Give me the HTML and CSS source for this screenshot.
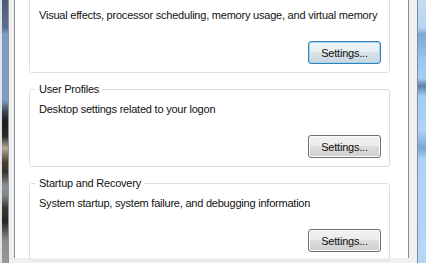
FILE: index.html
```html
<!DOCTYPE html>
<html lang="en">
<head>
    <meta charset="UTF-8">
    <title>System Properties - Advanced</title>
    <link rel="stylesheet" href="styles.css">
</head>
<body>
    <div class="glass glass-left"></div>
    <div class="dialog">
        <div class="tab-page">
            <div class="group group-first">
                <div class="group-title">Performance</div>
                <p class="group-desc">Visual effects, processor scheduling, memory usage, and virtual memory</p>
                <div class="group-actions">
                    <button class="btn btn-default">Settings...</button>
                </div>
            </div>

            <div class="group">
                <div class="group-title">User Profiles</div>
                <p class="group-desc">Desktop settings related to your logon</p>
                <div class="group-actions">
                    <button class="btn">Settings...</button>
                </div>
            </div>

            <div class="group">
                <div class="group-title">Startup and Recovery</div>
                <p class="group-desc">System startup, system failure, and debugging information</p>
                <div class="group-actions">
                    <button class="btn">Settings...</button>
                </div>
            </div>
        </div>
    </div>
    <div class="glass glass-right"></div>
</body>
</html>
```

FILE: styles.css
```css
* {
    margin: 0;
    padding: 0;
    box-sizing: border-box;
}

body {
    font-family: 'Liberation Sans', Arial, sans-serif;
    font-size: 11px;
    letter-spacing: -0.22px;
    color: #111;
    display: flex;
    width: 426px;
    height: 263px;
    overflow: hidden;
    background: #f0f0f0;
}

/* window frame (aero glass) */
.glass {
    height: 100%;
    flex-shrink: 0;
}

.glass-left {
    width: 9px;
    border-left: 2px solid #dfe4ea;
    border-right: 1px solid #8a9098;
    background: linear-gradient(180deg,
        #4c5d74 0px, #5a7090 28px, #7c9cc4 34px, #7d9cc3 100px,
        #3c4450 112px, #1e1e1e 122px, #2a2826 136px, #b4ab94 148px,
        #4a4033 162px, #3a3128 172px, #8d9392 186px, #7f8584 196px,
        #3d352b 208px, #2c2620 222px, #8b8b89 240px, #9a9a98 263px);
}

.glass-right {
    width: 9px;
    border-left: 1px solid #7c8ea4;
    background: linear-gradient(180deg,
        #c6dcf2 0px, #b6d4f2 28px, #7fa6d4 34px, #9cc4ec 60px,
        #a9cff3 78px, #5f7fa6 86px, #a4cbf2 96px, #b0d3f4 130px,
        #7ea6d6 148px, #aed2f4 160px, #b5d7f6 263px);
}

.dialog {
    flex: 1;
    min-width: 0;
    padding: 0 8px 0 5px;
    background: #f0f0f0;
}

.tab-page {
    height: 100%;
    background: #fff;
    border-left: 1px solid #898c95;
    border-right: 1px solid #898c95;
    padding: 0 18px 0 14px;
}

/* group boxes */
.group {
    height: 78px;
    border: 1px solid #d5dfe5;
    border-radius: 3px;
    padding: 0 8px 0 9px;
    margin-top: 16px;
}

.group-first {
    margin-top: -5px;
}

.group-title {
    width: fit-content;
    margin: -9px 0 0 -4px;
    padding: 0 3px 0 4px;
    line-height: 16px;
    background: #fff;
}

.group-desc {
    margin-top: 4px;
    line-height: 16px;
    white-space: nowrap;
}

.group-actions {
    display: flex;
    justify-content: flex-end;
    margin-top: 18px;
}

/* windows 7 push buttons */
.btn {
    width: 73px;
    height: 23px;
    font-family: inherit;
    font-size: 11px;
    letter-spacing: inherit;
    color: #111;
    border: 1px solid #707070;
    border-radius: 3px;
    background: linear-gradient(180deg, #f2f2f2 0%, #ebebeb 50%, #dddddd 50%, #cfcfcf 100%);
    box-shadow: inset 0 0 0 1px #fbfbfb;
}

.btn-default {
    border-color: #3c7fb1;
    box-shadow: inset 0 0 0 1px #9ad8f6;
    background: linear-gradient(180deg, #f0f4f6 0%, #e8eef1 50%, #d8e2e8 50%, #cbd8e0 100%);
}
```
